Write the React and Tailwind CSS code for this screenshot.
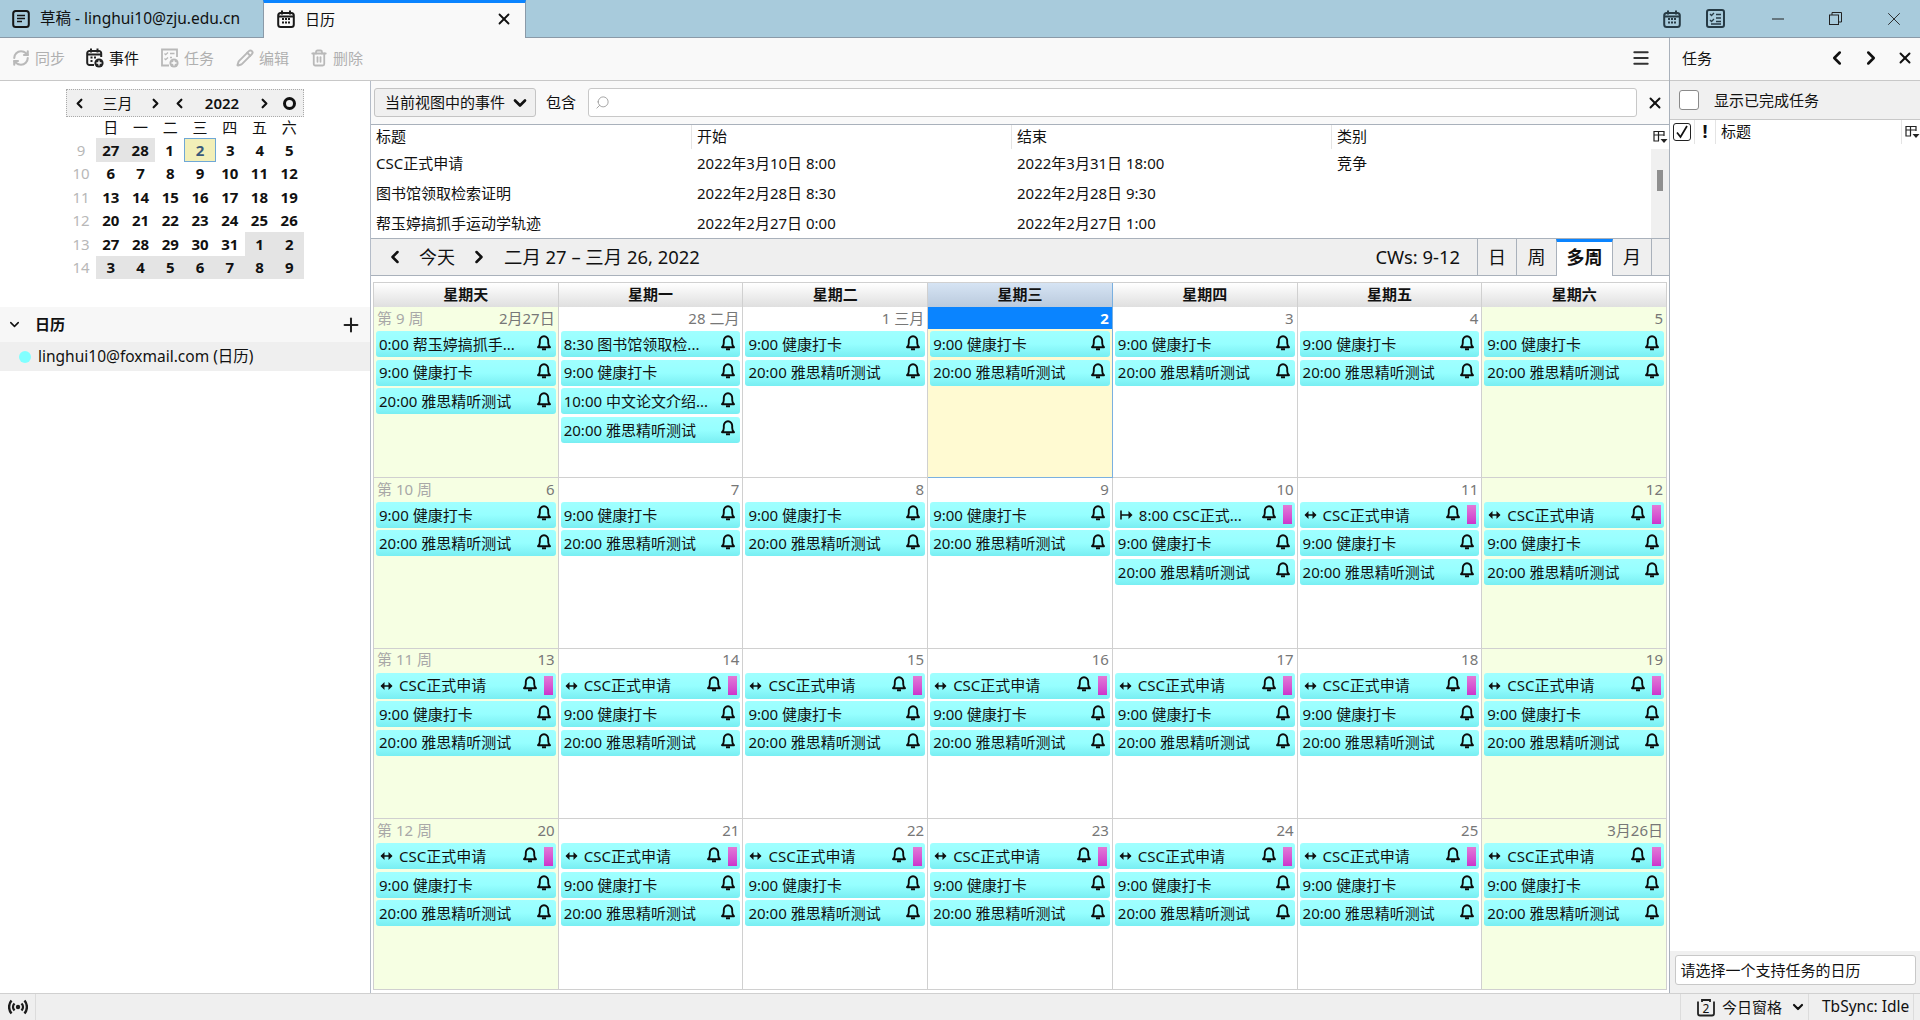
import React from "react";
import { RefreshCw, Pencil, Trash2, ChevronLeft, ChevronRight, ChevronDown, X, Plus, Search, Menu } from "lucide-react";

const FONT = { fontFamily: '"Noto Sans","Noto Sans CJK SC",sans-serif' };

function CalIcon({ size = 18, color = "#1a1a1a" }) {
  return (
    <svg width={size} height={size} viewBox="0 0 18 18" fill="none" className="shrink-0">
      <rect x="1.2" y="3" width="15.6" height="14" rx="2.5" stroke={color} strokeWidth="2" />
      <path d="M1.5 6.5h15" stroke={color} strokeWidth="2" />
      <path d="M5 0.5v4M13 0.5v4" stroke={color} strokeWidth="2" />
      <path d="M5 9h2M8 9h2M11 9h2M5 12.5h2M8 12.5h2M11 12.5h2" stroke={color} strokeWidth="2" />
    </svg>
  );
}
function TasksIcon({ size = 19, color = "#263a45" }) {
  return (
    <svg width={size} height={size} viewBox="0 0 19 19" fill="none" className="shrink-0">
      <rect x="1" y="1" width="17" height="17" rx="2" stroke={color} strokeWidth="2" />
      <path d="M4 5l1.5 1.5L8 4M4 11l1.5 1.5L8 10" stroke={color} strokeWidth="1.3" />
      <path d="M10 5.5h5M10 9h5M10 12.5h5M5 15h10" stroke={color} strokeWidth="1.4" />
    </svg>
  );
}
function DocIcon() {
  return (
    <svg width="18" height="18" viewBox="0 0 18 18" fill="none" className="shrink-0">
      <rect x="1.2" y="1" width="15.6" height="16" rx="2.5" stroke="#151515" strokeWidth="2" />
      <path d="M5 5.5h8M5 8.5h8M5 11.5h5" stroke="#151515" strokeWidth="1.6" />
    </svg>
  );
}
function NewEventIcon({ color = "#222" }) {
  return (
    <svg width="18" height="20" viewBox="0 0 18 20" fill="none" className="shrink-0">
      <path d="M8 17H3.5A2.2 2.2 0 0 1 1.2 14.8V5.2A2.2 2.2 0 0 1 3.5 3h9.5a2.2 2.2 0 0 1 2.2 2.2V9" stroke={color} strokeWidth="2" />
      <path d="M1.5 6.5h13.5M5 0.5v4M11.5 0.5v4M4.5 9.5h2M8 9.5h2M4.5 13h2" stroke={color} strokeWidth="2" />
      <circle cx="13" cy="15" r="4.6" fill={color} />
      <path d="M13 12.5v5M10.5 15h5" stroke="#fff" strokeWidth="1.3" />
    </svg>
  );
}
function NewTaskIcon() {
  const c = "#b9b9b9";
  return (
    <svg width="18" height="20" viewBox="0 0 18 20" fill="none" className="shrink-0">
      <path d="M8 17.5H1V1.5h15V9" stroke={c} strokeWidth="1.8" />
      <path d="M3.5 5.5l1.2 1.2L7 4.5M3.5 10.5l1.2 1.2L7 9.5M9 5.5h4.5M9 9.5h2" stroke={c} strokeWidth="1.3" />
      <circle cx="13" cy="15" r="4.6" fill={c} />
      <path d="M13 12.5v5M10.5 15h5" stroke="#fff" strokeWidth="1.3" />
    </svg>
  );
}
function Picker() {
  return (
    <svg width="15" height="14" viewBox="0 0 15 14" fill="none" className="shrink-0">
      <path d="M1 1.5h10M1 5h10M1 1v10h5M5.5 1v10M11 1v5" stroke="#222" strokeWidth="1.2" />
      <path d="M7.5 9h7L11 13z" fill="#222" />
    </svg>
  );
}
function Bell() {
  return (
    <svg width="14" height="16" viewBox="0 0 14 16" fill="none" className="shrink-0">
      <path d="M1 12.2h12c-1.3-1.2-1.8-2.2-1.8-4.2V5.8C11.2 3.2 9.4 1.2 7 1.2S2.8 3.2 2.8 5.8V8c0 2-.5 3-1.8 4.2z" stroke="#0c0c0c" strokeWidth="1.9" strokeLinejoin="round" />
      <path d="M5 14.3h4" stroke="#0c0c0c" strokeWidth="1.9" />
    </svg>
  );
}
function ArrowBoth() {
  return (
    <svg width="13" height="10" viewBox="0 0 13 10" fill="none" className="shrink-0">
      <path d="M1.5 5h10" stroke="#111" strokeWidth="1.6" />
      <path d="M4.5 1L0.5 5l4 4zM8.5 1l4 4-4 4z" fill="#111" />
    </svg>
  );
}
function ArrowStart() {
  return (
    <svg width="13" height="10" viewBox="0 0 13 10" fill="none" className="shrink-0">
      <path d="M1 0.5v9M1 5h10" stroke="#111" strokeWidth="1.6" />
      <path d="M8.5 1l4 4-4 4z" fill="#111" />
    </svg>
  );
}
function Signal() {
  return (
    <svg width="20" height="16" viewBox="0 0 20 16" fill="none">
      <circle cx="10" cy="8" r="2.2" fill="#1c1c1c" />
      <path d="M6.5 4.5a5 5 0 0 0 0 7M13.5 4.5a5 5 0 0 1 0 7M3.5 1.5a10 10 0 0 0 0 13M16.5 1.5a10 10 0 0 1 0 13" stroke="#1c1c1c" strokeWidth="2.4" />
    </svg>
  );
}

function Pill({ ev }) {
  const multi = ev.kind === "both" || ev.kind === "start";
  return (
    <div className="h-[26px] rounded-[3px] bg-gradient-to-b from-[#a0ffff] via-[#96ffff] to-[#78eef2] flex items-center pl-[3px] pr-[3px] text-[15px] text-[#111] whitespace-nowrap overflow-hidden">
      {ev.kind === "both" && <span className="mr-[6px] ml-[1px] flex"><ArrowBoth /></span>}
      {ev.kind === "start" && <span className="mr-[6px] ml-[2px] flex"><ArrowStart /></span>}
      <span className="flex-1 min-w-0">{ev.t}</span>
      <span className={multi ? "mb-[3px] mr-[7px] flex" : "mb-[3px] mr-[2px] flex"}><Bell /></span>
      {multi && <span className="w-[9px] h-[19px] bg-gradient-to-b from-[#e278d6] to-[#cc33cc] shrink-0" />}
    </div>
  );
}

const HK = { t: "9:00 健康打卡" };
const YS = { t: "20:00 雅思精听测试" };
const CSC = { t: "CSC正式申请", kind: "both" };
const CSCS = { t: "8:00 CSC正式...", kind: "start" };

const std = [HK, YS];
const cscRow = [CSC, HK, YS];
const weeks = [
  {
    wk: "第 9 周",
    days: [
      { d: "2月27日", ev: [{ t: "0:00 帮玉婷搞抓手..." }, HK, YS] },
      { d: "28 二月", ev: [{ t: "8:30 图书馆领取检..." }, HK, { t: "10:00 中文论文介绍..." }, YS] },
      { d: "1 三月", ev: std },
      { d: "2", ev: std, today: true },
      { d: "3", ev: std },
      { d: "4", ev: std },
      { d: "5", ev: std },
    ],
  },
  {
    wk: "第 10 周",
    days: [
      { d: "6", ev: std },
      { d: "7", ev: std },
      { d: "8", ev: std },
      { d: "9", ev: std },
      { d: "10", ev: [CSCS, HK, YS] },
      { d: "11", ev: cscRow },
      { d: "12", ev: cscRow },
    ],
  },
  {
    wk: "第 11 周",
    days: ["13", "14", "15", "16", "17", "18", "19"].map((d) => ({ d, ev: cscRow })),
  },
  {
    wk: "第 12 周",
    days: ["20", "21", "22", "23", "24", "25", "3月26日"].map((d) => ({ d, ev: cscRow })),
  },
];
const heads = ["星期天", "星期一", "星期二", "星期三", "星期四", "星期五", "星期六"];

const miniRows = [
  ["9", "27", "28", "1", "2", "3", "4", "5"],
  ["10", "6", "7", "8", "9", "10", "11", "12"],
  ["11", "13", "14", "15", "16", "17", "18", "19"],
  ["12", "20", "21", "22", "23", "24", "25", "26"],
  ["13", "27", "28", "29", "30", "31", "1", "2"],
  ["14", "3", "4", "5", "6", "7", "8", "9"],
];
function miniCell(r, c) {
  if (r === 0 && c === 3) return "bg-[#f2efb8] border border-[#6fa8d6] text-[#3b5a7a]";
  if ((r === 0 && c < 2) || (r === 4 && c > 4) || r === 5) return "bg-[#e4e4e4] text-[#111]";
  return "text-[#111]";
}

function MiniMonth() {
  return (
    <div className="w-[238px] ml-[66px] mt-[8px]">
      <div className="h-[28px] bg-[#f0f0f0] border border-dotted border-[#aaaaaa] flex items-center text-[15px] text-[#111]">
        <ChevronLeft size={15} strokeWidth={3.5} className="ml-[5px]" />
        <span className="w-[61px] text-center">三月</span>
        <ChevronRight size={15} strokeWidth={3.5} />
        <ChevronLeft size={15} strokeWidth={3.5} className="ml-[9px]" />
        <span className="w-[70px] text-center font-semibold">2022</span>
        <ChevronRight size={15} strokeWidth={3.5} />
        <span className="ml-[11px] w-[13px] h-[13px] rounded-full border-[3px] border-[#111]" />
      </div>
      <div className="flex h-[21px] items-center text-[15px] text-[#111]">
        <span className="w-[30px]" />
        {["日", "一", "二", "三", "四", "五", "六"].map((w) => (
          <span key={w} className="flex-1 text-center">{w}</span>
        ))}
      </div>
      {miniRows.map((row, r) => (
        <div key={r} className="flex h-[23.5px]">
          <span className="w-[30px] flex items-center justify-center text-[15px] text-[#b8b8b8]">{row[0]}</span>
          {row.slice(1).map((n, c) => (
            <span key={c} className={`flex-1 flex items-center justify-center text-[15px] font-bold ${miniCell(r, c)}`}>{n}</span>
          ))}
        </div>
      ))}
    </div>
  );
}

function ToolBtn({ icon, label, on, cls }) {
  return (
    <div className={`flex items-center gap-[5px] text-[15px] ${on ? "text-[#111]" : "text-[#b0b0b0]"} ${cls}`}>
      {icon}
      <span>{label}</span>
    </div>
  );
}

export default function App() {
  return (
    <div className="w-[1920px] h-screen flex flex-col overflow-hidden bg-white text-[#111] text-[15px]" style={FONT}>
      {/* tabs */}
      <div className="h-[38px] shrink-0 bg-[#a8cbdc] border-b border-[#8a9aa8] flex items-stretch">
        <div className="w-[263px] pl-[12px] flex items-center gap-[10px]">
          <DocIcon />
          <span className="whitespace-nowrap text-[15.5px]">草稿 - linghui10@zju.edu.cn</span>
        </div>
        <div className="w-[263px] h-[38px] bg-[#f9f9f9] border-x border-[#8a9aa8] border-t-[3px] border-t-[#0a84ff] flex items-center pl-[13px] pr-[12px] pb-[3px]">
          <CalIcon />
          <span className="ml-[10px] flex-1">日历</span>
          <X size={18} strokeWidth={2.4} />
        </div>
        <div className="flex-1" />
        <div className="flex items-center">
          <CalIcon color="#263a45" />
          <span className="w-[25px]" />
          <TasksIcon />
          <svg width="12" height="2" viewBox="0 0 12 2" className="ml-[47px]"><path d="M0 1h12" stroke="#222" strokeWidth="1" /></svg>
          <svg width="13" height="13" viewBox="0 0 13 13" fill="none" className="ml-[45px]">
            <rect x="0.5" y="3" width="9" height="9.5" stroke="#222" /><path d="M3 3V0.5h9.5V10H9.5" stroke="#222" />
          </svg>
          <X size={22} strokeWidth={1} className="ml-[41px] mr-[15px] text-[#222]" />
        </div>
      </div>

      {/* body */}
      <div className="flex-1 min-h-0 flex">
        <div className="flex-1 min-w-0 flex flex-col">
          {/* toolbar */}
          <div className="h-[43px] shrink-0 bg-[#f9f9f9] border-b border-[#c8c8c8] flex items-center pl-[12px] pr-[18px] pb-[2px]">
            <ToolBtn icon={<RefreshCw size={18} strokeWidth={2.8} className="text-[#b9b9b9]" />} label="同步" />
            <ToolBtn on cls="ml-[21px]" icon={<NewEventIcon />} label="事件" />
            <ToolBtn cls="ml-[22px]" icon={<NewTaskIcon />} label="任务" />
            <ToolBtn cls="ml-[22px]" icon={<Pencil size={18} strokeWidth={2.6} className="text-[#b9b9b9]" />} label="编辑" />
            <ToolBtn cls="ml-[21px]" icon={<Trash2 size={18} strokeWidth={2.4} className="text-[#b9b9b9]" />} label="删除" />
            <span className="flex-1" />
            <Menu size={20} strokeWidth={2.4} className="text-[#333]" />
          </div>

          <div className="flex-1 min-h-0 flex">
            {/* left */}
            <div className="w-[370px] shrink-0 flex flex-col">
              <MiniMonth />
              <div className="mt-[28px] h-[35px] bg-[#f7f7f7] flex items-center pl-[7px] pr-[8px]">
                <ChevronDown size={15} strokeWidth={2.4} />
                <span className="ml-[13px] font-bold flex-1">日历</span>
                <Plus size={22} strokeWidth={2.2} className="text-[#222]" />
              </div>
              <div className="h-[29px] bg-[#efefef] flex items-center pl-[19px]">
                <span className="w-[12px] h-[12px] rounded-full bg-[#80ffff]" />
                <span className="ml-[7px] text-[15.5px]">linghui10@foxmail.com (日历)</span>
              </div>
            </div>

            {/* main */}
            <div className="flex-1 min-w-0 border-l border-[#b4bcc8] flex flex-col">
              <div className="h-[44px] shrink-0 bg-[#f9f9f9] border-b border-[#a9b1bb] flex items-center pl-[3px]">
                <div className="w-[162px] h-[29px] rounded-[3px] bg-[#f0f0f0] border border-[#c4c4c4] flex items-center pl-[10px] whitespace-nowrap">
                  当前视图中的事件
                  <ChevronDown size={20} strokeWidth={3.2} className="ml-[5px]" />
                </div>
                <span className="ml-[10px]">包含</span>
                <div className="ml-[12px] w-[1049px] h-[29px] rounded-[3px] bg-white border border-[#c8c8c8] flex items-center pl-[6px]">
                  <Search size={15} strokeWidth={1.4} className="text-[#999] -scale-x-100" />
                </div>
                <X size={18} strokeWidth={2.6} className="ml-[9px]" />
              </div>

              {/* list */}
              <div className="h-[114px] shrink-0 border-b border-[#a9b1bb] flex">
                <div className="flex-1 min-w-0 flex flex-col">
                  <div className="h-[24px] grid grid-cols-[320px_320px_320px_1fr]">
                    {["标题", "开始", "结束", "类别"].map((h, i) => (
                      <span key={h} className={`pl-[5px] leading-[22px] ${i ? "border-l border-[#e4e4e4]" : ""}`}>{h}</span>
                    ))}
                  </div>
                  {[
                    ["CSC正式申请", "2022年3月10日 8:00", "2022年3月31日 18:00", "竞争"],
                    ["图书馆领取检索证明", "2022年2月28日 8:30", "2022年2月28日 9:30", ""],
                    ["帮玉婷搞抓手运动学轨迹", "2022年2月27日 0:00", "2022年2月27日 1:00", ""],
                  ].map((r) => (
                    <div key={r[0]} className="h-[30px] grid grid-cols-[320px_320px_320px_1fr] items-center">
                      {r.map((c, i) => <span key={i} className={i ? "pl-[6px]" : "pl-[5px]"}>{c}</span>)}
                    </div>
                  ))}
                </div>
                <div className="w-[18px] shrink-0 flex flex-col">
                  <div className="h-[24px] flex items-center justify-center"><Picker /></div>
                  <div className="flex-1 bg-[#f0f0f0] flex justify-center">
                    <span className="w-[6px] h-[21px] mt-[21px] bg-[#8f8f8f]" />
                  </div>
                </div>
              </div>

              {/* nav */}
              <div className="h-[37px] shrink-0 bg-[#efefef] border-b border-[#a9b1bb] flex items-stretch text-[18px]">
                <div className="flex items-center pl-[14px] flex-1 whitespace-nowrap">
                  <ChevronLeft size={20} strokeWidth={3} />
                  <span className="ml-[14px] w-[36px]">今天</span>
                  <ChevronRight size={20} strokeWidth={3} className="ml-[14px]" />
                  <span className="ml-[15px] text-[18.4px]">二月 27 – 三月 26, 2022</span>
                  <span className="flex-1" />
                  <span className="mr-[17px] text-[18.4px]">CWs: 9-12</span>
                </div>
                <div className="w-[39px] border-l border-[#a9b1bb] flex items-center justify-center">日</div>
                <div className="w-[40px] border-l border-[#a9b1bb] flex items-center justify-center">周</div>
                <div className="w-[57px] h-[37px] bg-white border-x border-[#a9b1bb] border-t-[3px] border-t-[#0a84ff] flex items-center justify-center font-bold pb-[3px]">多周</div>
                <div className="w-[38px] flex items-center justify-center">月</div>
                <div className="w-[18px] border-l border-[#a9b1bb]" />
              </div>

              {/* grid */}
              <div className="flex-1 min-h-0 flex flex-col pt-[6px] pl-[2px] pr-[2px] pb-[3px]">
                <div className="grid grid-cols-7 h-[25px] shrink-0 border-l border-t border-[#d0d0d0]">
                  {heads.map((h, i) => (
                    <div key={h} className={`flex items-center justify-center font-bold border-r border-b pb-[2px] ${i === 3 ? "bg-gradient-to-b from-[#d6e4f4] to-[#b9c9dc] border-[#7ab0e0]" : "bg-gradient-to-b from-[#ffffff] to-[#dedede] border-[#d0d0d0]"}`}>{h}</div>
                  ))}
                </div>
                <div className="flex-1 min-h-0 grid grid-rows-4">
                  {weeks.map((w) => (
                    <div key={w.wk} className="grid grid-cols-7 min-h-0 border-l border-[#d0d0d0]">
                      {w.days.map((day, i) => {
                        const wkEnd = i === 0 || i === 6;
                        return (
                          <div key={i} className={`min-w-0 border-r border-b flex flex-col ${day.today ? "bg-[#fffad2] border-[#7ab0e0]" : wkEnd ? "bg-[#f6ffe3] border-[#d0d0d0]" : "bg-white border-[#d0d0d0]"}`}>
                            {day.today ? (
                              <div className="h-[22px] mb-[2px] bg-[#0a84ff] text-white font-bold text-right pr-[3px] leading-[22px]">{day.d}</div>
                            ) : (
                              <div className="h-[24px] flex items-center justify-between px-[3px] pb-[2px] text-[#777]">
                                <span className="text-[#a8a8a8]">{i === 0 ? w.wk : ""}</span>
                                <span>{day.d}</span>
                              </div>
                            )}
                            <div className="flex flex-col gap-[2.6px] px-[2px]">
                              {day.ev.map((ev, k) => <Pill key={k} ev={ev} />)}
                            </div>
                          </div>
                        );
                      })}
                    </div>
                  ))}
                </div>
              </div>
            </div>
          </div>
        </div>

        {/* right pane */}
        <div className="w-[251px] shrink-0 border-l border-[#a9b1bb] flex flex-col">
          <div className="h-[43px] shrink-0 bg-[#f9f9f9] border-b border-[#c8c8c8] flex items-center pl-[12px] pb-[2px]">
            <span className="flex-1">任务</span>
            <ChevronLeft size={22} strokeWidth={2.8} />
            <ChevronRight size={22} strokeWidth={2.8} className="ml-[12px]" />
            <X size={18} strokeWidth={2.6} className="ml-[14px] mr-[6px]" />
          </div>
          <div className="h-[39px] shrink-0 bg-[#f0f0f0] border-b border-[#c8c8c8] flex items-center pl-[9px]">
            <span className="w-[20px] h-[20px] rounded-[3px] bg-white border border-[#8a8a8a]" />
            <span className="ml-[15px]">显示已完成任务</span>
          </div>
          <div className="h-[24px] shrink-0 flex items-center pl-[3px] pb-[1px]">
            <span className="w-[18px] h-[18px] rounded-[3px] border border-[#222] flex items-center justify-center">
              <svg width="14" height="14" viewBox="0 0 14 14" fill="none"><path d="M2 7.5l3.5 4.5L12 1" stroke="#111" strokeWidth="1.7" /></svg>
            </span>
            <span className="ml-[3px] h-[24px] border-l border-[#e4e4e4] w-[21px] flex items-center justify-center font-bold text-[18px]">!</span>
            <span className="h-[24px] border-l border-[#e4e4e4] pl-[5px] flex-1 flex items-center">标题</span>
            <span className="h-[24px] border-l border-[#e4e4e4] pl-[3px] flex items-center"><Picker /></span>
          </div>
          <div className="flex-1" />
          <div className="h-[42px] shrink-0 bg-[#f0f0f0] flex items-start justify-center pt-[4px]">
            <div className="w-[241px] h-[30px] rounded-[3px] bg-white border border-[#c8c8c8] flex items-center pl-[5px]">请选择一个支持任务的日历</div>
          </div>
        </div>
      </div>

      {/* status */}
      <div className="h-[27px] shrink-0 bg-[#efefef] border-t border-[#d0d0d0] flex items-center">
        <div className="w-[36px] h-full border-r border-[#dcdcdc] flex items-center justify-center"><Signal /></div>
        <span className="flex-1" />
        <div className="h-full border-l border-[#dcdcdc] flex items-center pl-[15px] w-[128px] gap-[6px]">
          <svg width="20" height="20" viewBox="0 0 20 20" fill="none" className="shrink-0">
            <path d="M2 4.5v12a2 2 0 0 0 2 2h12a2 2 0 0 0 2-2v-12M6 2v3M14 2v3M6 3h8" stroke="#222" strokeWidth="1.8" />
            <text x="10" y="16" textAnchor="middle" fontSize="12" fill="#111">2</text>
          </svg>
          <span className="whitespace-nowrap">今日窗格</span>
          <ChevronDown size={16} strokeWidth={3.2} className="ml-[2px] shrink-0" />
        </div>
        <div className="h-full border-l border-[#dcdcdc] flex items-center pl-[13px] w-[105px] whitespace-nowrap text-[15.5px]">TbSync: Idle</div>
        <div className="h-full border-l border-[#dcdcdc] w-[7px]" />
      </div>
    </div>
  );
}
